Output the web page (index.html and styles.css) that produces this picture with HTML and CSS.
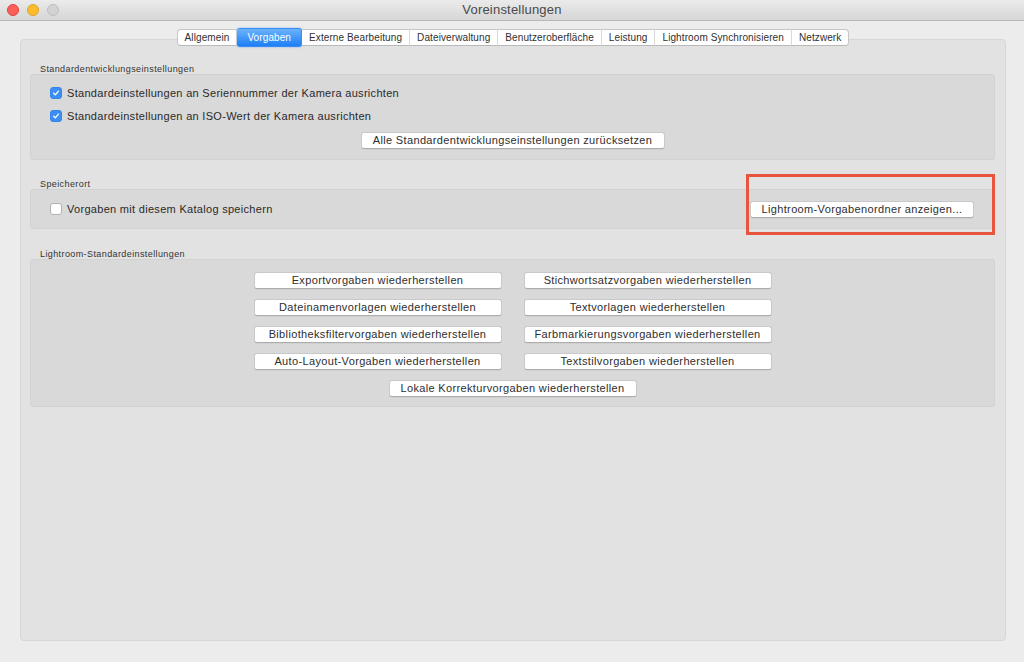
FILE: index.html
```html
<!DOCTYPE html>
<html lang="de">
<head>
<meta charset="utf-8">
<title>Voreinstellungen</title>
<link rel="stylesheet" href="styles.css">
</head>
<body>
<div class="window">
  <div class="titlebar">
    <div class="lights">
      <span class="light red"></span>
      <span class="light yellow"></span>
      <span class="light gray"></span>
    </div>
    <div class="title">Voreinstellungen</div>
    <div></div>
  </div>
  <div class="content">
    <div class="tabs">
      <span class="tab">Allgemein</span>
      <span class="tab active">Vorgaben</span>
      <span class="tab">Externe Bearbeitung</span>
      <span class="tab">Dateiverwaltung</span>
      <span class="tab">Benutzeroberfläche</span>
      <span class="tab">Leistung</span>
      <span class="tab">Lightroom Synchronisieren</span>
      <span class="tab">Netzwerk</span>
    </div>
    <div class="tabbox">
      <div class="group">
        <div class="group-label">Standardentwicklungseinstellungen</div>
        <div class="group-box dev">
          <div class="check-row">
            <span class="checkbox checked"><svg viewBox="0 0 12 12" width="12" height="12"><path d="M3.2 6.2 L5.2 8.2 L8.9 3.8" fill="none" stroke="#fff" stroke-width="1.6" stroke-linecap="round" stroke-linejoin="round"/></svg></span>
            <span>Standardeinstellungen an Seriennummer der Kamera ausrichten</span>
          </div>
          <div class="check-row">
            <span class="checkbox checked"><svg viewBox="0 0 12 12" width="12" height="12"><path d="M3.2 6.2 L5.2 8.2 L8.9 3.8" fill="none" stroke="#fff" stroke-width="1.6" stroke-linecap="round" stroke-linejoin="round"/></svg></span>
            <span>Standardeinstellungen an ISO-Wert der Kamera ausrichten</span>
          </div>
          <div class="center-row">
            <button class="btn btn-reset">Alle Standardentwicklungseinstellungen zurücksetzen</button>
          </div>
        </div>
      </div>
      <div class="group second">
        <div class="group-label">Speicherort</div>
        <div class="group-box store">
          <div class="check-row">
            <span class="checkbox"></span>
            <span>Vorgaben mit diesem Katalog speichern</span>
          </div>
          <button class="btn btn-folder">Lightroom-Vorgabenordner anzeigen...</button>
        </div>
      </div>
      <div class="group third">
        <div class="group-label">Lightroom-Standardeinstellungen</div>
        <div class="group-box defaults">
          <div class="btn-grid">
            <button class="btn">Exportvorgaben wiederherstellen</button>
            <button class="btn">Stichwortsatzvorgaben wiederherstellen</button>
            <button class="btn">Dateinamenvorlagen wiederherstellen</button>
            <button class="btn">Textvorlagen wiederherstellen</button>
            <button class="btn">Bibliotheksfiltervorgaben wiederherstellen</button>
            <button class="btn">Farbmarkierungsvorgaben wiederherstellen</button>
            <button class="btn">Auto-Layout-Vorgaben wiederherstellen</button>
            <button class="btn">Textstilvorgaben wiederherstellen</button>
          </div>
          <div class="center-row">
            <button class="btn btn-wide">Lokale Korrekturvorgaben wiederherstellen</button>
          </div>
        </div>
      </div>
    </div>
  </div>
  <div class="highlight"></div>
</div>
</body>
</html>
```

FILE: styles.css
```css
* { box-sizing: border-box; }
html, body {
  margin: 0;
  padding: 0;
  width: 1024px;
  height: 662px;
  overflow: hidden;
  background: #ececec;
  font-family: "Liberation Sans", Arial, sans-serif;
  color: #2b2b2b;
}
.window {
  position: relative;
  width: 1024px;
  height: 662px;
  background: #ececec;
}
.titlebar {
  height: 21px;
  display: grid;
  grid-template-columns: 1fr auto 1fr;
  align-items: center;
  background: linear-gradient(#ebebeb, #d6d6d6);
  border-bottom: 1px solid #b8b8b8;
}
.lights {
  display: flex;
  gap: 8px;
  padding-left: 7px;
  align-items: center;
}
.light {
  width: 12px;
  height: 12px;
  border-radius: 50%;
  display: block;
}
.light.red { background: #fc5f57; border: 1px solid #e0443e; }
.light.yellow { background: #fdbc2e; border: 1px solid #dea123; }
.light.gray { background: #d3d3d3; border: 1px solid #bdbdbd; }
.title {
  font-size: 13px;
  letter-spacing: 0.2px;
  color: #4a4a4a;
  line-height: 20px;
}
.content {
  padding: 8px 18px 0 20px;
}
.tabs {
  position: relative;
  z-index: 1;
  display: flex;
  justify-content: center;
  height: 17px;
}
.tab {
  display: block;
  height: 17px;
  line-height: 15px;
  font-size: 10px;
  letter-spacing: 0.1px;
  padding: 0 7px;
  background: #fff;
  color: #303030;
  border-top: 1px solid #c6c6c6;
  border-bottom: 1px solid #b9b9b9;
  border-right: 1px solid #dadada;
  white-space: nowrap;
}
.tab:first-child {
  border-left: 1px solid #c6c6c6;
  border-radius: 4px 0 0 4px;
}
.tab:last-child {
  border-right: 1px solid #c6c6c6;
  border-radius: 0 4px 4px 0;
}
.tab.active {
  background: linear-gradient(#6cb3fa, #1c7ff5);
  color: #fff;
  border-color: #3a8cf0;
  padding: 0 10px;
  height: 19px;
  margin-top: -1px;
  line-height: 17px;
  border-radius: 3px;
  box-shadow: 0 0 2px rgba(40,130,250,0.6);
}
.tabbox {
  margin-top: -7px;
  height: 602px;
  background: #e2e2e2;
  border: 1px solid #d6d6d6;
  border-radius: 4px;
  padding: 23px 10px 0 9px;
}
.group-label {
  font-size: 9px;
  letter-spacing: 0.4px;
  line-height: 9px;
  height: 11px;
  padding-top: 2px;
  padding-left: 10px;
  color: #333;
}
.group-box {
  background: #d9d9d9;
  border: 1px solid #d2d2d2;
  border-radius: 3px;
}
.group.second { margin-top: 18px; }
.group.third { margin-top: 19px; }
.dev {
  padding: 6px 0 10px 19px;
}
.check-row {
  display: flex;
  align-items: center;
  gap: 5px;
  height: 23px;
  font-size: 11px;
  letter-spacing: 0.3px;
  color: #2a2a2a;
}
.checkbox {
  width: 12px;
  height: 12px;
  border-radius: 3px;
  background: #fff;
  border: 1px solid #b3b3b3;
  display: flex;
  align-items: center;
  justify-content: center;
  flex: none;
}
.checkbox.checked {
  background: #3b8ef5;
  border-color: #3585ea;
}
.checkbox svg { display: block; }
.center-row {
  display: flex;
  justify-content: center;
}
.dev .center-row {
  margin-top: 5px;
  padding-right: 19px;
}
.btn {
  font-family: inherit;
  font-size: 11px;
  letter-spacing: 0.35px;
  color: #2e2e2e;
  background: #fff;
  border: 1px solid #c9c9c9;
  border-bottom-color: #adadad;
  border-radius: 3px;
  height: 17px;
  line-height: 15px;
  padding: 0 8px;
  margin: 0;
  white-space: nowrap;
  box-shadow: 0 0.5px 0 rgba(0,0,0,0.08);
}
.btn-reset { width: 304px; }
.store {
  height: 40px;
  display: flex;
  align-items: center;
  justify-content: space-between;
  padding: 0 20px 0 19px;
}
.btn-folder { width: 224px; }
.defaults {
  padding: 12px 0 9px 0;
}
.btn-grid {
  display: grid;
  grid-template-columns: 248px 248px;
  column-gap: 22px;
  row-gap: 10px;
  justify-content: center;
}
.defaults .center-row { margin-top: 10px; }
.btn-wide { width: 248px; }
.highlight {
  position: absolute;
  left: 746px;
  top: 174px;
  width: 249px;
  height: 61px;
  border: 3px solid #e8553f;
}
```
